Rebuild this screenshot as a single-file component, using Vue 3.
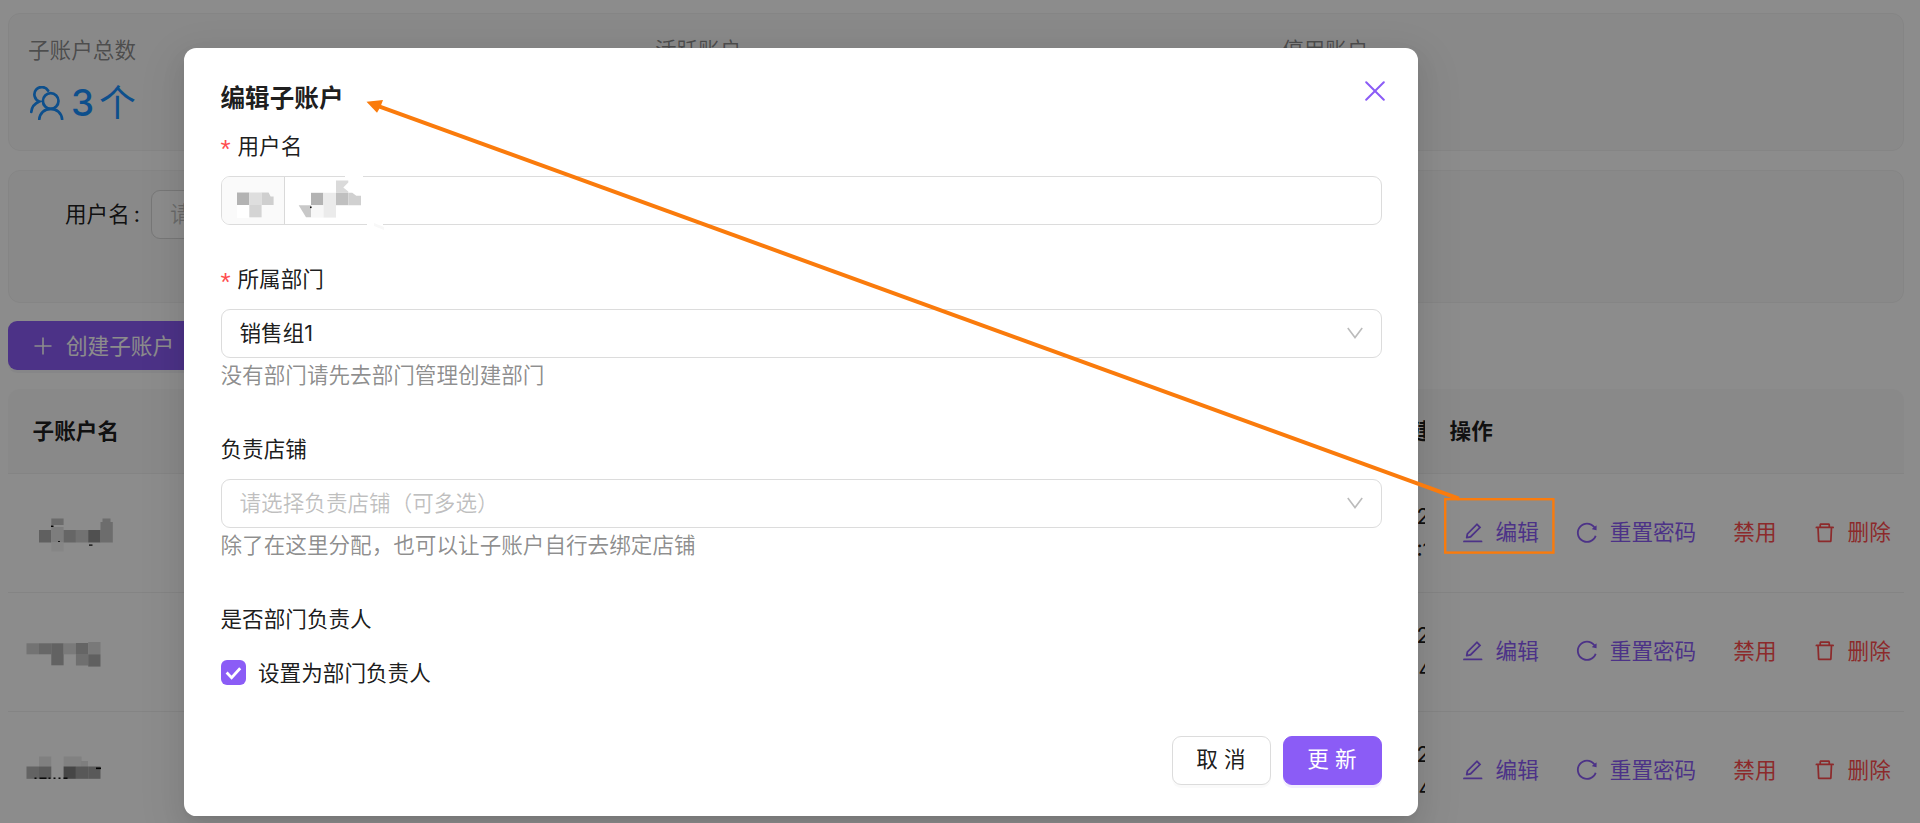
<template>
  <div class="page">
    <!-- Account list -->
    <section class="card stats">
      <div v-for="stat in stats" :key="stat.title" class="stat">
        <div class="stat-title">{{ stat.title }}</div>
        <div v-if="stat.value" class="stat-value">
          <svg class="stat-icon" viewBox="0 0 34 34">
            <circle cx="20.7" cy="15" r="7.8" />
            <path d="M9.3 33.2C9.8 27 14.6 22.8 20.7 22.8S31.6 27 32.1 33.2" />
            <path d="M18.2 4.7A7.4 7.4 0 1 0 9.3 15.4C5 17.2 1.7 21 1.3 26" />
          </svg>
          <span class="stat-number">{{ stat.value }}</span>
          <span>个</span>
        </div>
      </div>
    </section>

    <section class="card search">
      <label class="search-label">用户名<span class="colon">:</span></label>
      <div class="search-input">请输入用户名</div>
    </section>

    <button class="btn-create">
      <svg viewBox="0 0 18 18"><path d="M9 .5v17M.5 9h17" /></svg>
      创建子账户
    </button>

    <div class="table">
      <div class="row head">
        <div class="cell name">子账户名</div>
        <div class="cell created">创建</div>
        <div class="cell actions-title">操作</div>
      </div>
      <div v-for="(row, index) in rows" :key="index" class="row">
        <div class="cell name">
          <svg class="masked" viewBox="0 0 100 60">
            <rect
              v-for="(tile, i) in row.tiles"
              :key="i"
              :x="tile[0]"
              :y="tile[1]"
              :width="tile[2]"
              :height="tile[3]"
              :fill="tile[4]"
            />
          </svg>
        </div>
        <div class="cell created">
          <div>{{ row.date }}</div>
          <div>{{ row.time }}</div>
        </div>
        <div class="actions">
          <a v-for="action in actions" :key="action.text" :class="{ danger: action.danger }">
            <svg v-if="action.icon" viewBox="64 64 896 896"><path :d="action.icon" /></svg>
            <span>{{ action.text }}</span>
          </a>
        </div>
      </div>
    </div>

    <!-- Edit dialog -->
    <div class="mask">
      <div class="modal">
        <header class="modal-header">
          <h2>编辑子账户</h2>
          <svg class="close" viewBox="0 0 20 20"><path d="M1.2 1.2l17.6 17.6M18.8 1.2L1.2 18.8" /></svg>
        </header>

        <div class="form-item username">
          <label><i>*</i>用户名</label>
          <div class="control group">
            <div class="addon">
              <svg viewBox="0 0 64 47">
                <rect x="17" y="28" width="12.3" height="13" fill="#fff" />
                <rect x="17" y="15.5" width="12.3" height="12.5" fill="#b3b3b3" />
                <rect x="29.3" y="15.5" width="12.3" height="12.5" fill="#dedede" />
                <path d="M41.6 15.5h7l2 4h3v8.5h-12z" fill="#cfcfcf" />
                <rect x="29.3" y="28" width="12.3" height="12.3" fill="#d4d4d4" />
              </svg>
            </div>
            <svg class="value" viewBox="0 0 110 56">
              <path d="M62 2h18v5H62zM84 50h16v5H84z" fill="#fff" />
              <path d="M91 50l10 4v3l-10-4z" fill="#f8f8f8" />
              <path d="M53 7.5h12.3v2l-5 5 5 4v1.3H53z" fill="#dadada" />
              <rect x="28" y="19.8" width="12.3" height="12.4" fill="#b3b3b3" />
              <rect x="40.3" y="19.8" width="12.7" height="24.8" fill="#ebebeb" />
              <rect x="53" y="19.8" width="12.3" height="12.4" fill="#c0c0c0" />
              <path d="M65.3 19.8h4l4 3h4.7v9.4H65.3z" fill="#d0d0d0" />
              <path d="M15.7 32.3H28v12h-5z" fill="#c8c8c8" />
              <rect x="28" y="32.3" width="12.3" height="12.3" fill="#f7f7f7" />
              <rect x="27" y="33.5" width="1.6" height="1.6" fill="#111" />
            </svg>
          </div>
        </div>

        <div class="form-item">
          <label><i>*</i>所属部门</label>
          <div class="control">
            <span>销售组1</span>
            <svg class="arrow" viewBox="0 0 16 12"><path d="M.8 1l7.2 9.6L15.2 1" /></svg>
          </div>
          <p>没有部门请先去部门管理创建部门</p>
        </div>

        <div class="form-item">
          <label>负责店铺</label>
          <div class="control">
            <span class="placeholder">请选择负责店铺（可多选）</span>
            <svg class="arrow" viewBox="0 0 16 12"><path d="M.8 1l7.2 9.6L15.2 1" /></svg>
          </div>
          <p>除了在这里分配，也可以让子账户自行去绑定店铺</p>
        </div>

        <div class="form-item leader">
          <label>是否部门负责人</label>
          <div class="check-line">
            <span class="checkbox">
              <svg viewBox="0 0 25 25"><path d="M5.6 12.6l5 5.1 8.6-9.4" /></svg>
            </span>
            设置为部门负责人
          </div>
        </div>

        <footer class="modal-footer">
          <button>取 消</button>
          <button class="primary">更 新</button>
        </footer>
      </div>
    </div>

    <!-- Pointer from the edit link to the dialog -->
    <svg class="pointer" viewBox="0 0 1920 823">
      <path class="line" d="M1459 498.6L379 106.3" />
      <path class="tip" d="M366.5 101.7l16.5-1.6-2.5 6.6-3.5 6z" />
      <rect class="box" x="1445.2" y="499.2" width="108.2" height="53.4" />
    </svg>
  </div>
</template>

<script setup>
const editIcon =
  'M257.7 752c2 0 4-.2 6-.5L431.9 722c2-.4 3.9-1.3 5.3-2.8l423.9-423.9a9.96 9.96 0 000-14.1L694.9 114.9c-1.9-1.9-4.4-2.9-7.1-2.9s-5.2 1-7.1 2.9L256.8 538.8c-1.5 1.5-2.4 3.3-2.8 5.3l-29.5 168.2a33.5 33.5 0 009.4 29.8c6.6 6.4 14.9 9.9 23.8 9.9zm67.4-174.4L687.8 215l73.3 73.3-362.7 362.6-88.9 15.7 15.6-89zM880 836H144c-17.7 0-32 14.3-32 32v36c0 4.4 3.6 8 8 8h784c4.4 0 8-3.6 8-8v-36c0-17.7-14.3-32-32-32z'
const reloadIcon =
  'M909.1 209.3l-56.4 44.1C775.8 155.1 656.2 92 521.9 92 290 92 102.3 279.5 102 511.5 101.7 743.7 289.8 932 521.9 932c181.3 0 335.8-115 394.6-276.1 1.5-4.2-.7-8.9-4.9-10.3l-56.7-19.5a8 8 0 00-10.1 4.8c-1.8 5-3.8 10-5.9 14.9-17.3 41-42.1 77.8-73.7 109.4A344.77 344.77 0 01655.9 829c-42.3 17.9-87.4 27-133.8 27-46.5 0-91.5-9.1-133.8-27A341.5 341.5 0 01279 755.2a342.16 342.16 0 01-73.7-109.4c-17.9-42.4-27-87.4-27-133.9s9.1-91.5 27-133.9c17.3-41 42.1-77.8 73.7-109.4 31.6-31.6 68.4-56.4 109.3-73.8 42.3-17.9 87.4-27 133.8-27 46.5 0 91.5 9.1 133.8 27a341.5 341.5 0 01109.3 73.8c9.9 9.9 19.2 20.4 27.8 31.4l-60.2 47a8 8 0 003 14.1l175.6 43c5 1.2 9.9-2.6 9.9-7.7l.8-180.9c-.1-6.6-7.8-10.3-13-6.2z'
const deleteIcon =
  'M360 184h-8c4.4 0 8-3.6 8-8v8h304v-8c0 4.4 3.6 8 8 8h-8v72h72v-80c0-35.3-28.7-64-64-64H352c-35.3 0-64 28.7-64 64v80h72v-72zm504 72H160c-17.7 0-32 14.3-32 32v32c0 4.4 3.6 8 8 8h60.4l24.7 523c1.6 34.1 29.8 61 63.9 61h454c34.2 0 62.3-26.8 63.9-61l24.7-523H888c4.4 0 8-3.6 8-8v-32c0-17.7-14.3-32-32-32zM731.3 840H292.7l-24.2-512h487l-24.2 512z'

const stats = [
  { title: '子账户总数', value: '3' },
  { title: '活跃账户' },
  { title: '停用账户' }
]

const actions = [
  { text: '编辑', icon: editIcon },
  { text: '重置密码', icon: reloadIcon },
  { text: '禁用', danger: true },
  { text: '删除', icon: deleteIcon, danger: true }
]

// tiles: x, y, width, height, fill
const rows = [
  {
    date: '202',
    time: '20:1',
    tiles: [
      [18.3, 14.5, 12.3, 6.5, '#c4c4c4'],
      [18, 21.5, 2.5, 1.5, '#000'],
      [6, 26, 12.3, 12.5, '#b0b0b0'],
      [18.3, 23, 12.3, 15.5, '#e4e4e4'],
      [18.3, 38.5, 12.3, 9, '#f4f4f4'],
      [25, 37, 2, 1, '#222'],
      [30.6, 26, 12.3, 12.5, '#bababa'],
      [42.9, 26, 12.3, 12.5, '#d0d0d0'],
      [55.2, 26, 12.3, 12.5, '#929292'],
      [67.5, 18, 12.3, 20.5, '#c6c6c6'],
      [69.5, 14.5, 8, 4, '#c6c6c6'],
      [56, 40.5, 3.5, 1.2, '#000']
    ]
  },
  {
    date: '202',
    time: '14:4',
    tiles: [
      [-6.5, 20.3, 12.5, 11, '#d2d2d2'],
      [6, 20.3, 12.3, 11, '#bcbcbc'],
      [18.3, 20.3, 12.3, 22, '#b2b2b2'],
      [30.6, 20.3, 12.3, 11, '#dedede'],
      [42.9, 20, 12.3, 11, '#b8b8b8'],
      [42.9, 31, 12.3, 11.5, '#cacaca'],
      [55.2, 19, 12.3, 12.3, '#dcdcdc'],
      [55.2, 31.3, 12.3, 12.3, '#b0b0b0']
    ]
  },
  {
    date: '202',
    time: '14:4',
    tiles: [
      [6, 14.5, 12.3, 10.3, '#eaeaea'],
      [30.6, 14.5, 18, 10.3, '#ececec'],
      [48, 19, 7, 6, '#e6e6e6'],
      [-6.5, 24.5, 12.5, 12.3, '#b4b4b4'],
      [6, 24.5, 12.3, 12.3, '#a6a6a6'],
      [30.6, 24.5, 12.3, 12.3, '#808080'],
      [42.9, 24.5, 12.3, 12.3, '#a0a0a0'],
      [55.2, 24.5, 12.3, 12.3, '#a2a2a2'],
      [63, 25.5, 5, 1.6, '#000'],
      [1.5, 35.5, 2, 1.4, '#000'],
      [6.5, 35.5, 7, 1.4, '#000'],
      [15.5, 35.5, 2, 1.4, '#000'],
      [20.5, 35.5, 2, 1.4, '#000'],
      [25.5, 35.5, 2, 1.4, '#000'],
      [30.5, 35.5, 4, 1.4, '#000']
    ]
  }
]
</script>

<style>
body {
  background: #fff;
}
</style>

<style scoped>
.page {
  position: relative;
  width: 1920px;
  height: 823px;
  padding: 13px 16px 0 8px;
  box-sizing: border-box;
  overflow: hidden;
  background: #fff;
  color: rgba(0, 0, 0, 0.9);
  font-family: Inter, 'Noto Sans CJK SC', sans-serif;
  font-size: 21.6px;
  line-height: 34px;
}

button {
  font: inherit;
}

.card {
  box-sizing: border-box;
  border: 1px solid #f3f3f3;
  border-radius: 12px;
  background: #fafafa;
}

.stats {
  display: grid;
  grid-template-columns: repeat(3, 627px);
  height: 138px;
  padding: 19px 0 0 19px;
}

.stat-title {
  color: rgba(0, 0, 0, 0.45);
}

.stat-value {
  display: flex;
  align-items: center;
  height: 56px;
  margin-top: 8px;
  color: #1890ff;
  font-size: 36.8px;
}

.stat-icon {
  width: 34px;
  height: 34px;
  margin: 0 7px 0 2px;
  fill: none;
  stroke: currentColor;
  stroke-width: 2.7;
  stroke-linecap: round;
}

.stat-number {
  margin-right: 5px;
  font-weight: 500;
}

.search {
  display: flex;
  height: 133px;
  margin-top: 19px;
  padding: 19px 0 0 56px;
}

.search-label {
  width: 86px;
  line-height: 49px;
}

.colon {
  margin-left: 4px;
}

.search-input {
  width: 400px;
  height: 49px;
  padding-left: 18px;
  box-sizing: border-box;
  border: 1px solid #d9d9d9;
  border-radius: 9px;
  background: #fff;
  color: rgba(0, 0, 0, 0.25);
  line-height: 47px;
}

.btn-create {
  display: flex;
  align-items: center;
  gap: 14px;
  height: 49px;
  margin-top: 18px;
  padding: 0 26px;
  border: 0;
  border-radius: 9px;
  background: #8b5cf6;
  box-shadow: 0 3px 0 rgba(5, 0, 60, 0.04);
  color: #fff;
}

.btn-create svg {
  width: 18px;
  height: 18px;
  stroke: #fff;
  stroke-width: 1.6;
}

.table {
  width: 1896px;
  margin-top: 19px;
}

.row {
  display: flex;
  height: 118.8px;
  box-sizing: border-box;
  border-bottom: 1px solid #f0f0f0;
}

.row.head {
  height: 85px;
  border-radius: 12px 12px 0 0;
  background: #fafafa;
  font-weight: 600;
  line-height: 84px;
}

.cell {
  padding-left: 24.6px;
  box-sizing: border-box;
}

.cell.name {
  width: 1357px;
}

.cell.created {
  width: 60px;
  overflow: hidden;
  white-space: nowrap;
}

.row:not(.head) .cell.created {
  padding-top: 25px;
}

.masked {
  display: block;
  width: 100px;
  height: 60px;
  margin-top: 30px;
  overflow: visible;
}

.actions {
  display: flex;
  align-items: center;
  gap: 37.2px;
  height: 116.5px;
  padding-left: 36.8px;
}

.actions a {
  display: flex;
  align-items: center;
  gap: 12.3px;
  color: #8b5cf6;
}

.actions a.danger {
  color: #ff4d4f;
}

.actions svg {
  width: 21.5px;
  height: 21.5px;
  fill: currentColor;
}

.mask {
  position: absolute;
  inset: 0;
  padding: 48px 0 0 184px;
  background: rgba(0, 0, 0, 0.45);
}

.modal {
  width: 1234px;
  height: 767.5px;
  padding: 31px 36.5px 0;
  box-sizing: border-box;
  border-radius: 12.3px;
  background: #fff;
  box-shadow:
    0 9px 24px rgba(0, 0, 0, 0.08),
    0 4px 9px -6px rgba(0, 0, 0, 0.12),
    0 14px 43px 12px rgba(0, 0, 0, 0.05);
}

.modal-header {
  display: flex;
  justify-content: space-between;
  height: 50px;
}

.modal-header h2 {
  margin: 0;
  font-size: 24.6px;
  font-weight: 600;
  line-height: 39px;
}

.close {
  width: 20px;
  height: 20px;
  margin: 2.3px -3.3px 0 0;
  stroke: #8b5cf6;
  stroke-width: 2;
  stroke-linecap: round;
}

.form-item {
  height: 169.8px;
}

.form-item.username {
  height: 133.4px;
}

.form-item label {
  display: block;
  height: 47px;
}

.form-item i {
  display: inline-block;
  width: 17px;
  color: #ff4d4f;
  font-style: normal;
  font-family: 'Liberation Sans', sans-serif;
  font-size: 26px;
  line-height: 20px;
  vertical-align: -4px;
}

.control {
  display: flex;
  align-items: center;
  justify-content: space-between;
  height: 49px;
  padding: 0 18px 2px;
  box-sizing: border-box;
  border: 1.4px solid #dcdcdc;
  border-radius: 9px;
}

.control.group {
  justify-content: flex-start;
  padding: 0;
}

.addon {
  flex: none;
  width: 63px;
  height: 47px;
  box-sizing: border-box;
  border-right: 1px solid #d9d9d9;
  border-radius: 8px 0 0 8px;
  background: #fafafa;
}

.addon svg {
  display: block;
  width: 64px;
  height: 47px;
  margin-left: -1.5px;
}

.control .value {
  width: 110px;
  height: 56px;
  margin-left: -1.8px;
  overflow: visible;
}

.placeholder {
  color: rgba(0, 0, 0, 0.25);
}

.arrow {
  width: 16px;
  height: 12px;
  fill: none;
  stroke: #bcbcbc;
  stroke-width: 1.6;
}

.form-item p {
  margin: 0;
  color: rgba(0, 0, 0, 0.45);
}

.form-item.leader {
  height: 134px;
}

.check-line {
  display: flex;
  align-items: center;
  gap: 12.5px;
  height: 52px;
  margin-top: -2px;
}

.checkbox {
  width: 25px;
  height: 25px;
  border-radius: 6px;
  background: #8b5cf6;
}

.checkbox svg {
  display: block;
  fill: none;
  stroke: #fff;
  stroke-width: 2.8;
}

.modal-footer {
  display: flex;
  justify-content: flex-end;
  gap: 12px;
}

.modal-footer button {
  width: 99px;
  height: 49px;
  padding: 0 0 2px;
  border: 1.4px solid #dcdcdc;
  border-radius: 9px;
  background: #fff;
  box-shadow: 0 3px 0 rgba(0, 0, 0, 0.02);
  color: rgba(0, 0, 0, 0.9);
}

.modal-footer .primary {
  border-color: #8b5cf6;
  background: #8b5cf6;
  box-shadow: 0 3px 0 rgba(139, 92, 246, 0.1);
  color: #fff;
}

.pointer {
  position: absolute;
  inset: 0;
  width: 1920px;
  height: 823px;
  pointer-events: none;
}

.pointer .line {
  stroke: #fa7b0c;
  stroke-width: 4;
}

.pointer .tip {
  fill: #fa7b0c;
}

.pointer .box {
  fill: none;
  stroke: #fa7b0c;
  stroke-width: 2.4;
}
</style>
